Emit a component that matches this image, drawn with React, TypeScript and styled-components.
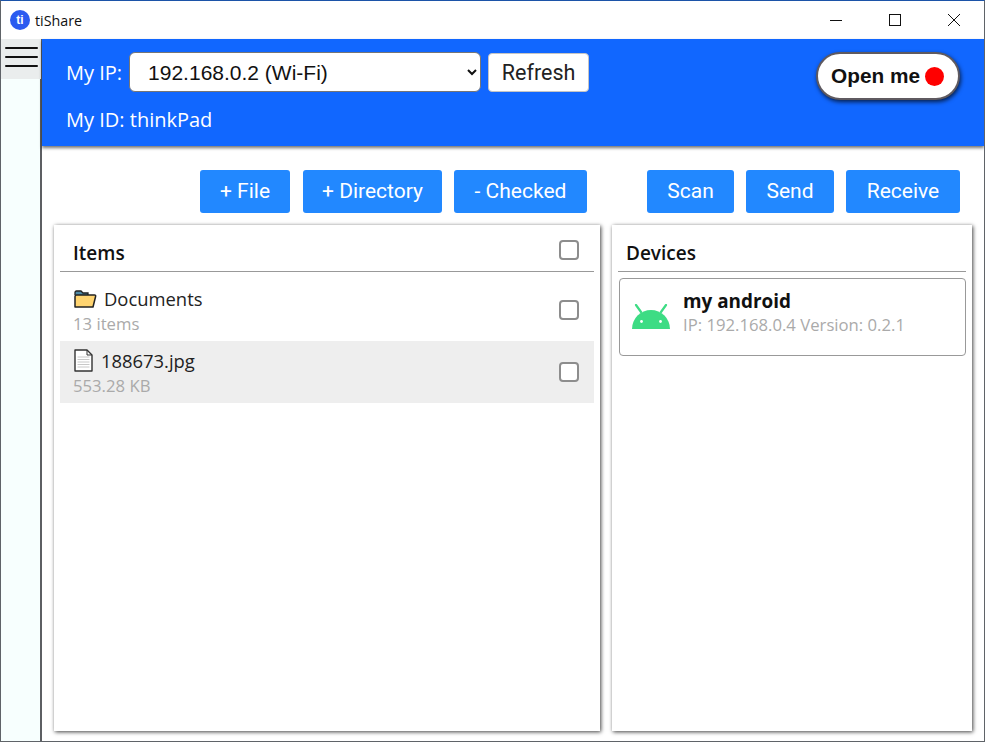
import React from "react";
import styled, { createGlobalStyle } from "styled-components";

const Global = createGlobalStyle`
  html, body { margin: 0; padding: 0; background: #fff; }
  body { font-family: "Open Sans", "Noto Sans", sans-serif; }
  * { box-sizing: border-box; }
`;

const Win = styled.div`
  width: 985px; height: 742px; display: flex; flex-direction: column;
  border: 1px solid #5f6368; border-top: 1px solid #1c54a8; overflow: hidden;
`;
const TitleBar = styled.div`
  height: 38px; flex: none; display: flex; align-items: center; background: #fff; padding: 0 1px 0 9px;
`;
const Logo = styled.div`
  width: 20px; height: 20px; border-radius: 50%; background: #2b5bf0; color: #fff;
  font: bold 12px/20px "Liberation Sans", sans-serif; text-align: center;
`;
const AppName = styled.div`
  margin-left: 5px; font-size: 14.3px; color: #111; flex: 1; font-family: "Open Sans", sans-serif;
`;
const WinBtn = styled.div`
  width: 59px; height: 38px; display: flex; align-items: center; justify-content: center;
`;
const Body = styled.div`flex: 1; display: flex; min-height: 0;`;
const Side = styled.div`
  width: 41px; flex: none; background: #f7fffe; border-right: 2px solid #5d5f63;
`;
const Burger = styled.div`
  height: 40px; background: #eaeded; padding: 8px 3px 0 4px; display: flex; flex-direction: column; gap: 7px;
  margin-right: -2px; width: 40px;
`;
const BurgerLine = styled.div`height: 2px; background: #111; border-radius: 1px; width: 33px;`;
const Main = styled.div`flex: 1; display: flex; flex-direction: column; min-width: 0;`;
const Header = styled.div`
  height: 107px; flex: none; background: #1167ff; box-shadow: 0 2px 3px rgba(0,0,0,.55);
  display: flex; justify-content: space-between; color: #fff; position: relative;
  padding: 13px 24px 0 24px; font-size: 20px;
`;
const HeaderLeft = styled.div`display: flex; flex-direction: column; gap: 15px;`;
const IpRow = styled.div`display: flex; align-items: center;`;
const IpLabel = styled.span`margin-right: 7px;`;
const IpSelect = styled.select`
  width: 352px; height: 40px; border-radius: 6px; border: 1px solid #767676; background: #fff;
  font: 21px "Liberation Sans", sans-serif; padding: 0 14px; color: #111; margin-right: 7px;
`;
const RefreshBtn = styled.button`
  width: 101px; height: 39px; border: 1px solid #c4c4c4; border-radius: 4px; background: #fff;
  font: 21.5px "Roboto", sans-serif; color: #222;
`;
const IdRow = styled.div`line-height: 26px;`;
const OpenMe = styled.div`
  width: 144px; height: 48px; margin-top: 0; border-radius: 24px; background: #fff;
  border: 2px solid #5f5a60; box-shadow: 1px 2px 4px rgba(0,0,0,.7);
  display: flex; align-items: center; padding-left: 13px; gap: 5px;
  font: bold 20.8px "Liberation Sans", sans-serif; color: #111;
`;
const Dot = styled.div`width: 19px; height: 19px; border-radius: 50%; background: #f00;`;
const Toolbar = styled.div`
  flex: none; display: flex; padding: 24px 24px 0 158px; height: 79px;
`;
const ActionBtn = styled.div<{ $w: number; $gap?: number }>`
  width: ${p => p.$w}px; margin-right: ${p => p.$gap ?? 0}px; height: 43px; background: #2288ff; color: #fff; border-radius: 3px;
  display: flex; align-items: center; justify-content: center; font: 21px "Roboto", sans-serif; padding-bottom: 2px;
`;
const Panels = styled.div`
  flex: 1; display: flex; padding: 0 12px 10px 12px; gap: 12px; min-height: 0;
`;
const Panel = styled.div<{ $w: number }>`
  width: ${p => p.$w}px; flex: none; background: #fff; box-shadow: 1px 1px 4px rgba(0,0,0,.75);
  padding: 0 6px;
`;
const PanelHead = styled.div<{ $pad: number }>`
  height: 47px; border-bottom: 1px solid #999; display: flex; align-items: center; justify-content: space-between;
  padding: 9px 15px 0 ${p => p.$pad}px; font-size: 19px; font-weight: 600; color: #111;
`;
const Check = styled.div`
  width: 20px; height: 20px; border: 2px solid #8d8d8d; border-radius: 4px; background: #fff; flex: none;
`;
const HeadCheck = styled(Check)`margin-top: -5px;`;
const Item = styled.div<{ $alt?: boolean; $h: number }>`
  height: ${p => p.$h}px; display: flex; align-items: center; justify-content: space-between;
  padding: 0 15px 0 13px; background: ${p => (p.$alt ? "#eeeeee" : "#fff")};
`;
const ItemText = styled.div`display: flex; flex-direction: column;`;
const ItemName = styled.div<{ $gap: number }>`
  display: flex; align-items: center; gap: ${p => p.$gap}px; font-size: 18.4px; line-height: 26px; color: #222;
`;
const Sub = styled.div`font-size: 16.7px; line-height: 23px; color: #aaa;`;
const ItemsList = styled.div`padding-top: 7px;`;
const Device = styled.div`
  margin: 6px 0 0 1px; width: 347px; height: 78px; border: 1px solid #999; border-radius: 4px;
  display: flex; align-items: center; padding: 0 0 0 12px; gap: 13px;
`;
const DevName = styled.div`font-size: 18.9px; font-weight: 700; line-height: 24px; color: #111;`;
const DevInfo = styled.div`display: flex; flex-direction: column; margin-top: -9px;`;

const FolderIcon = () => (
  <svg width="24" height="20" viewBox="0 0 24 20">
    <path d="M2 6V3.5Q2 2 3.5 2H8l2 2h5v2" fill="#4f8aa6" stroke="#222" strokeWidth="1.3" />
    <path d="M2 18V7.5Q2 6 3.5 6H21.5Q23 6 22.6 7.5L20 18Z" fill="#ffd470" stroke="#222" strokeWidth="1.5" strokeLinejoin="round" />
  </svg>
);
const FileIcon = () => (
  <svg width="20" height="23" viewBox="0 0 20 23">
    <path d="M2 1H14l5 5V22H2Z" fill="#fff" stroke="#333" strokeWidth="1.4" strokeLinejoin="round" />
    <path d="M14 1v5h5" fill="none" stroke="#333" strokeWidth="1" />
    <path d="M4.5 8h12M4.5 10.5h12M4.5 13h12M4.5 15.5h12M4.5 18h12" stroke="#c8c8c8" strokeWidth="1" />
  </svg>
);
const AndroidIcon = () => (
  <svg width="38" height="26" viewBox="0 0 38 26">
    <path d="M0 25A19 19 0 0 1 38 25Z" fill="#3ddc84" />
    <path d="M9 8L4 1M29 8L34 1" stroke="#3ddc84" strokeWidth="2.2" strokeLinecap="round" />
    <circle cx="9.5" cy="17.5" r="1.4" fill="#fff" />
    <circle cx="28.5" cy="17.5" r="1.4" fill="#fff" />
  </svg>
);

export default function App() {
  return (
    <Win>
      <Global />
      <TitleBar>
        <Logo>ti</Logo>
        <AppName>tiShare</AppName>
        <WinBtn><svg width="12" height="12"><path d="M0 6.5h12" stroke="#111" /></svg></WinBtn>
        <WinBtn><svg width="12" height="12"><rect x=".5" y=".5" width="11" height="11" fill="none" stroke="#111" /></svg></WinBtn>
        <WinBtn><svg width="12" height="12"><path d="M0 0L12 12M12 0L0 12" stroke="#111" /></svg></WinBtn>
      </TitleBar>
      <Body>
        <Side>
          <Burger><BurgerLine /><BurgerLine /><BurgerLine /></Burger>
        </Side>
        <Main>
          <Header>
            <HeaderLeft>
              <IpRow>
                <IpLabel>My IP:</IpLabel>
                <IpSelect defaultValue="a"><option value="a">192.168.0.2 (Wi-Fi)</option></IpSelect>
                <RefreshBtn>Refresh</RefreshBtn>
              </IpRow>
              <IdRow>My ID: thinkPad</IdRow>
            </HeaderLeft>
            <OpenMe>Open me<Dot /></OpenMe>
          </Header>
          <Toolbar>
            <ActionBtn $w={90} $gap={13}>+ File</ActionBtn>
            <ActionBtn $w={139} $gap={12}>+ Directory</ActionBtn>
            <ActionBtn $w={133} $gap={60}>- Checked</ActionBtn>
            <ActionBtn $w={87} $gap={12}>Scan</ActionBtn>
            <ActionBtn $w={88} $gap={12}>Send</ActionBtn>
            <ActionBtn $w={114}>Receive</ActionBtn>
          </Toolbar>
          <Panels>
            <Panel $w={546}>
              <PanelHead $pad={13}>Items<HeadCheck /></PanelHead>
              <ItemsList>
                <Item $h={62}>
                  <ItemText>
                    <ItemName $gap={7}><FolderIcon />Documents</ItemName>
                    <Sub>13 items</Sub>
                  </ItemText>
                  <Check />
                </Item>
                <Item $h={62} $alt>
                  <ItemText>
                    <ItemName $gap={8}><FileIcon />188673.jpg</ItemName>
                    <Sub>553.28 KB</Sub>
                  </ItemText>
                  <Check />
                </Item>
              </ItemsList>
            </Panel>
            <Panel $w={360}>
              <PanelHead $pad={8}>Devices</PanelHead>
              <Device>
                <AndroidIcon />
                <DevInfo>
                  <DevName>my android</DevName>
                  <Sub>IP: 192.168.0.4 Version: 0.2.1</Sub>
                </DevInfo>
              </Device>
            </Panel>
          </Panels>
        </Main>
      </Body>
    </Win>
  );
}
